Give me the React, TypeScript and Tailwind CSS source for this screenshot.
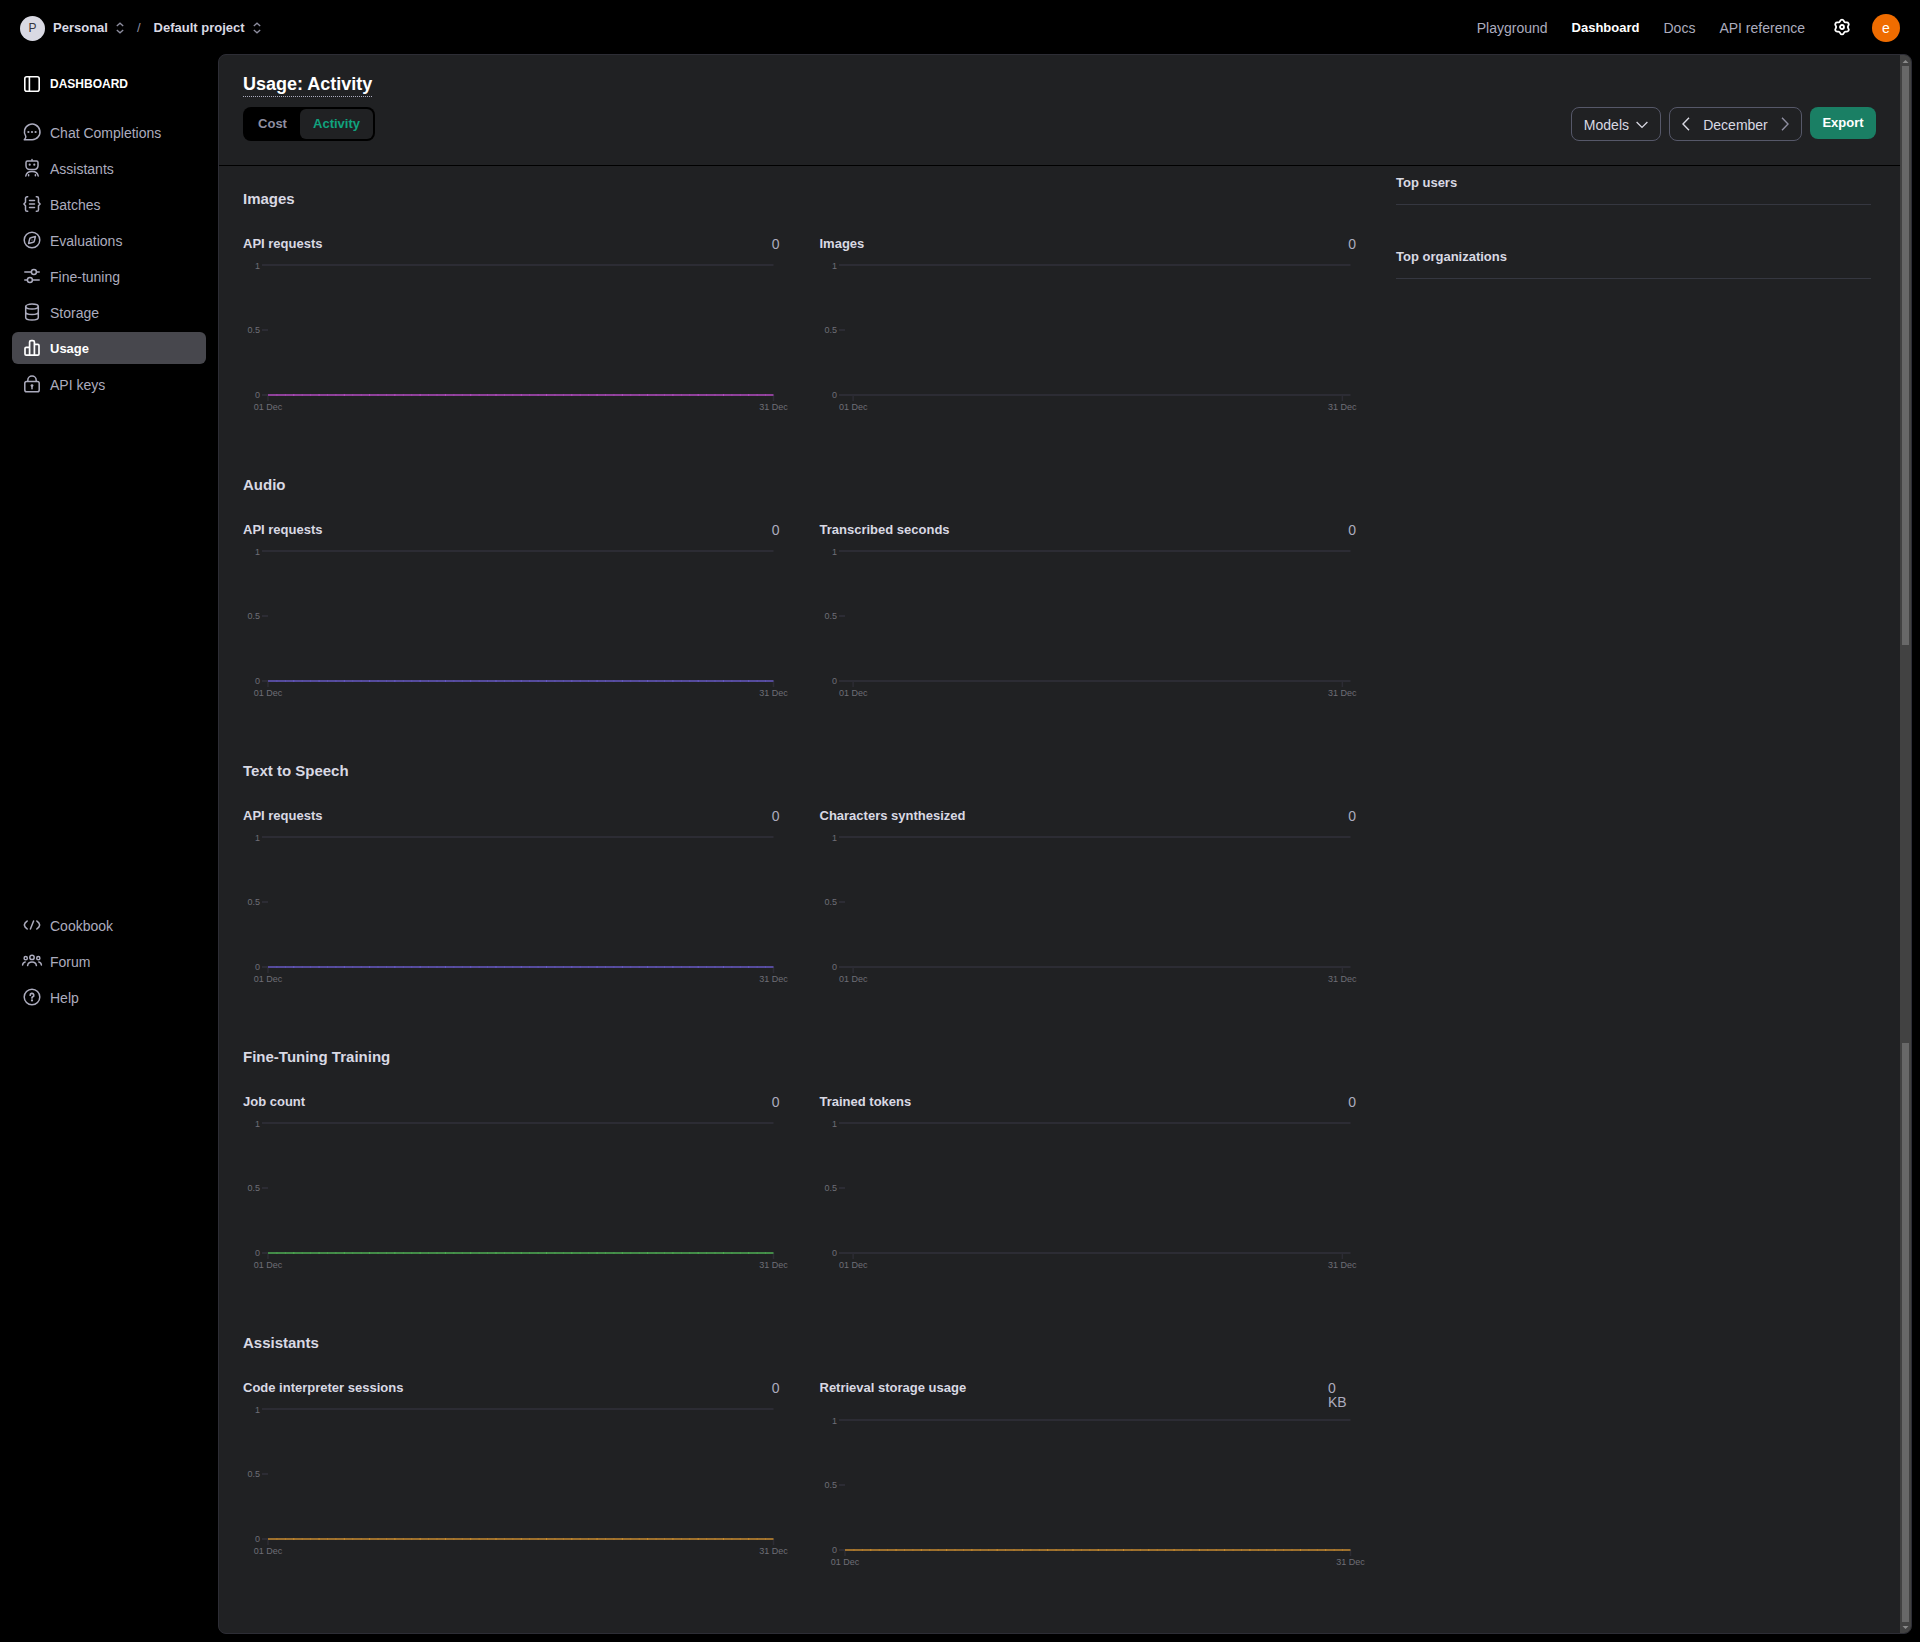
import React from "react";

type IconProps = { className?: string };

function Svg({ children, className }: React.PropsWithChildren<IconProps>) {
  return (
    <svg
      viewBox="0 0 18 18"
      aria-hidden="true"
      className={"h-[18px] w-[18px] shrink-0 overflow-visible " + (className ?? "")}
      fill="none"
      stroke="currentColor"
      strokeWidth="1.5"
      strokeLinecap="round"
      strokeLinejoin="round"
    >
      {children}
    </svg>
  );
}

const PanelIcon = () => (
  <Svg>
    <rect x="1.8" y="1.8" width="14.4" height="14.4" rx="2" strokeWidth="1.6" />
    <path d="M6.4 2v14" strokeWidth="1.6" />
  </Svg>
);
const ChatIcon = () => (
  <Svg>
    <path d="M1.3 16.7h7.9a7.8 7.8 0 1 0-6.4-3.300c.2 1.100-.5 2.400-1.500 3.300z" />
    <g fill="currentColor" stroke="none">
      <circle cx="5.4" cy="9" r="1.1" />
      <circle cx="9" cy="9" r="1.1" />
      <circle cx="12.6" cy="9" r="1.1" />
    </g>
  </Svg>
);
const RobotIcon = () => (
  <Svg>
    <path d="M9 .4V2M4.500 2h9A1.500 1.500 0 0 1 15 3.500v3.300a3.600 3.600 0 0 1-3.600 3.600H6.600A3.600 3.600 0 0 1 3 6.800V3.500A1.500 1.500 0 0 1 4.500 2z" />
    <path d="M2.800 17c.4-2.800 2.900-4.600 6.200-4.600s5.800 1.800 6.200 4.600M5.600 16.800v-1M12.400 16.800v-1" />
    <circle cx="6.700" cy="5.700" r="1.100" fill="currentColor" stroke="none" />
    <circle cx="11.300" cy="5.700" r="1.100" fill="currentColor" stroke="none" />
  </Svg>
);
const BatchIcon = () => (
  <Svg>
    <path d="M4.700 1.700h-.6a1.600 1.600 0 0 0-1.600 1.600v3.900L.9 9l1.600 1.800v3.900a1.600 1.600 0 0 0 1.600 1.600h.6M13.300 1.700h.6a1.600 1.600 0 0 1 1.600 1.600v3.900L17.100 9l-1.600 1.800v3.900a1.600 1.600 0 0 1-1.600 1.600h-.6M6.500 5.600h5M6.500 9h5M6.500 12.400h5" />
  </Svg>
);
const CompassIcon = () => (
  <Svg>
    <circle cx="9" cy="9" r="7.8" />
    <path d="M12.400 5.600 7.800 6.700a1.400 1.400 0 0 0-1.100 1.100l-1.100 4.600 4.600-1.100a1.400 1.400 0 0 0 1.100-1.100z" />
    <circle cx="9" cy="9" r=".6" fill="currentColor" stroke="none" />
  </Svg>
);
const TuneIcon = () => (
  <Svg>
    <path d="M1.800 5h6.400M13.600 5h2.600M1.800 13h2.400M9.600 13h6.600" />
    <circle cx="10.900" cy="5" r="2.500" />
    <circle cx="6.900" cy="13" r="2.500" />
  </Svg>
);
const StorageIcon = () => (
  <Svg>
    <ellipse cx="9" cy="3.600" rx="6.300" ry="2.500" />
    <path d="M2.700 3.600v10.800c0 1.400 2.800 2.500 6.300 2.500s6.300-1.100 6.300-2.500V3.600M2.700 9c0 1.400 2.800 2.500 6.300 2.500s6.300-1.100 6.300-2.500" />
  </Svg>
);
const BarsIcon = () => (
  <Svg>
    <path
      strokeWidth="1.7"
      d="M6.600 16.200H3.200A1.200 1.200 0 0 1 2 15V9.600a1.200 1.200 0 0 1 1.200-1.200h3.400M11.400 5.400h3.400A1.200 1.200 0 0 1 16 6.600V15a1.200 1.200 0 0 1-1.200 1.200h-3.400M6.600 16.200V3.100a1.500 1.500 0 0 1 1.500-1.500h1.800a1.500 1.500 0 0 1 1.500 1.500v13.100z"
    />
  </Svg>
);
const LockIcon = () => (
  <Svg>
    <rect x="1.800" y="6.400" width="14.400" height="10.400" rx="1.800" />
    <path d="M4.800 6.200v-.9a4.200 4.200 0 0 1 8.400 0v.9M9 11.500v2.200" />
    <circle cx="9" cy="10.600" r="1.400" fill="currentColor" stroke="none" />
  </Svg>
);
const CodeIcon = () => (
  <Svg>
    <path d="M4.200 5 2.200 6.900 1.300 9l.9 2.100 2 1.900M13.800 5l2 1.900.9 2.100-.9 2.100-2 1.900M10.600 5l-3.200 8" />
  </Svg>
);
const PeopleIcon = () => (
  <Svg>
    <circle cx="9" cy="5.400" r="2.200" />
    <circle cx="2.700" cy="6.200" r="1.600" />
    <circle cx="15.300" cy="6.200" r="1.600" />
    <path d="M4.600 13.600c.4-2.300 2.100-3.500 4.400-3.500s4 1.200 4.400 3.500M-.4 13c.2-1.700 1-2.700 2.600-3M18.400 13c-.2-1.700-1-2.700-2.600-3" />
  </Svg>
);
const HelpIcon = () => (
  <Svg>
    <circle cx="9" cy="9" r="7.8" />
    <path d="M7.200 7.200A1.800 1.800 0 1 1 9.800 8.800c-.5.300-.8.600-.8 1.200" strokeWidth="1.700" />
    <circle cx="9" cy="12.400" r="1.100" fill="currentColor" stroke="none" />
  </Svg>
);
const GearIcon = () => (
  <Svg>
    <path
      strokeWidth="1.800"
      d="M7.300 1.700a1.900 1.900 0 0 1 3.400 0l.3.600a1.900 1.900 0 0 0 1.900 1.100h.9a1.900 1.900 0 0 1 1.700 2.900l-.4.700a1.900 1.900 0 0 0 0 2l.4.700a1.900 1.900 0 0 1-1.700 2.900h-.9a1.900 1.900 0 0 0-1.900 1.100l-.3.600a1.900 1.900 0 0 1-3.400 0l-.3-.6a1.900 1.900 0 0 0-1.900-1.100h-.9a1.900 1.900 0 0 1-1.700-2.900l.4-.7a1.900 1.900 0 0 0 0-2l-.4-.7a1.900 1.900 0 0 1 1.700-2.900h.9A1.900 1.900 0 0 0 7 2.300z"
    />
    <circle cx="9" cy="8" r="2" strokeWidth="1.800" />
  </Svg>
);
const SortIcon = () => (
  <svg viewBox="0 0 8 12" aria-hidden="true" className="h-3 w-2 shrink-0" fill="none" stroke="#8e8ea0" strokeWidth="1.3">
    <path d="M.8 4 4 1.200 7.200 4M.8 8 4 10.800 7.200 8" />
  </svg>
);

type NavItem = { label: string; Icon: () => React.JSX.Element; active?: boolean };

const mainNav: NavItem[] = [
  { label: "Chat Completions", Icon: ChatIcon },
  { label: "Assistants", Icon: RobotIcon },
  { label: "Batches", Icon: BatchIcon },
  { label: "Evaluations", Icon: CompassIcon },
  { label: "Fine-tuning", Icon: TuneIcon },
  { label: "Storage", Icon: StorageIcon },
  { label: "Usage", Icon: BarsIcon, active: true },
  { label: "API keys", Icon: LockIcon },
];
const helpNav: NavItem[] = [
  { label: "Cookbook", Icon: CodeIcon },
  { label: "Forum", Icon: PeopleIcon },
  { label: "Help", Icon: HelpIcon },
];

function NavList({ items }: { items: NavItem[] }) {
  return (
    <ul className="flex flex-col gap-1">
      {items.map(({ label, Icon, active }) => (
        <li key={label}>
          <a
            href="#"
            aria-current={active ? "page" : undefined}
            className={
              "flex h-8 items-center gap-[9px] rounded-md pl-[11px] " +
              (active ? "bg-[#47474d] text-[13px] font-bold text-white" : "text-sm text-[#acacbe]")
            }
          >
            <Icon />
            <span className="pt-0.5">{label}</span>
          </a>
        </li>
      ))}
    </ul>
  );
}

type ChartSpec = { title: string; value: string; kind: "area" | "bar" };
type SectionSpec = { title: string; color: string; charts: ChartSpec[] };

const sections: SectionSpec[] = [
  {
    title: "Images",
    color: "#b44ac0",
    charts: [
      { title: "API requests", value: "0", kind: "area" },
      { title: "Images", value: "0", kind: "bar" },
    ],
  },
  {
    title: "Audio",
    color: "#6558c4",
    charts: [
      { title: "API requests", value: "0", kind: "area" },
      { title: "Transcribed seconds", value: "0", kind: "bar" },
    ],
  },
  {
    title: "Text to Speech",
    color: "#6558c4",
    charts: [
      { title: "API requests", value: "0", kind: "area" },
      { title: "Characters synthesized", value: "0", kind: "bar" },
    ],
  },
  {
    title: "Fine-Tuning Training",
    color: "#4caf50",
    charts: [
      { title: "Job count", value: "0", kind: "area" },
      { title: "Trained tokens", value: "0", kind: "bar" },
    ],
  },
  {
    title: "Assistants",
    color: "#c98a2b",
    charts: [
      { title: "Code interpreter sessions", value: "0", kind: "area" },
      { title: "Retrieval storage usage", value: "0 KB", kind: "area" },
    ],
  },
];

const steps = Array.from({ length: 59 }, (_, i) => i + 1);

function Plot({ kind, color }: { kind: "area" | "bar"; color: string }) {
  const first = kind === "bar" ? 100 / 62 : 0;
  const ends = [
    { x: first + "%", label: "01 Dec" },
    { x: 100 - first + "%", label: "31 Dec" },
  ];
  return (
    <div className="pr-[6px] pl-[25px]">
      <svg role="img" aria-label="Daily values for December" className="block h-[160px] w-full overflow-visible text-[9px]">
        <g fill="#6e6e76" textAnchor="end">
          <text x="-8" y="15">1</text>
          <text x="-8" y="79">0.5</text>
          <text x="-8" y="144">0</text>
        </g>
        <g fill="#2c2c34">
          <rect x="-6" y="10" width="6" height="2" />
          <rect x="0" y="10" width="100%" height="2" />
          <rect x="-6" y="75" width="6" height="2" />
          <rect x="-6" y="140" width="6" height="2" />
          <rect x="0" y="140" width="100%" height="2" />
        </g>
        {ends.map((e) => (
          <g key={e.label}>
            <line x1={e.x} x2={e.x} y1="141" y2="147" stroke="#2c2c34" strokeWidth="1.5" />
            <text x={e.x} y="156" fill="#6e6e76" textAnchor="middle">
              {e.label}
            </text>
          </g>
        ))}
        {kind === "area" && (
          <g fill={color}>
            <rect x="0" y="140" width="100%" height="2" opacity="0.72" />
            {steps.map((i) => (
              <rect key={i} x={(i * 100) / 60 + "%"} y="140" width="1" height="2" opacity={i % 3 === 0 ? 1 : 0.5} />
            ))}
          </g>
        )}
      </svg>
    </div>
  );
}

function Chart({ spec, color }: { spec: ChartSpec; color: string }) {
  const wide = spec.value.length > 1;
  return (
    <div className="min-w-0 flex-1">
      <div className="flex items-start justify-between">
        <h3 className="text-[13px] leading-[14px] font-bold text-[#d9d9e3]">{spec.title}</h3>
        <span className={"text-sm leading-[14px] text-[#acacbe] " + (wide ? "w-7" : "")}>{spec.value}</span>
      </div>
      <div className={wide ? "" : "pt-[3px]"}>
        <Plot kind={spec.kind} color={color} />
      </div>
    </div>
  );
}

export default function App() {
  return (
    <div className="flex min-h-screen flex-col bg-black font-['Liberation_Sans',sans-serif] text-sm text-[#d9d9e3]">
      <header className="flex h-[54px] items-center justify-between px-5 pt-0.5">
        <div className="flex items-center gap-2 text-[13px] font-bold">
          <span className="flex h-[25px] w-[25px] items-center justify-center rounded-full bg-[#d9d9e3] text-xs font-normal text-[#353740]">P</span>
          <button type="button" className="flex items-center gap-2">
            Personal <SortIcon />
          </button>
          <span className="mx-[5px] font-normal text-[#8e8ea0]">/</span>
          <button type="button" className="flex items-center gap-2">
            Default project <SortIcon />
          </button>
        </div>
        <div className="flex items-center gap-7 text-[#acacbe]">
          <nav aria-label="Site" className="flex items-center gap-6">
            <a href="#">Playground</a>
            <a href="#" className="text-[13px] font-bold text-white">Dashboard</a>
            <a href="#">Docs</a>
            <a href="#">API reference</a>
          </nav>
          <div className="flex items-center gap-[21px]">
            <button type="button" aria-label="Settings" className="text-white">
              <GearIcon />
            </button>
            <button type="button" aria-label="Account" className="h-7 w-7 rounded-full bg-[#ef6c00] text-sm text-white">
              e
            </button>
          </div>
        </div>
      </header>

      <div className="flex flex-1 pr-2 pb-2">
        <aside className="w-[218px] shrink-0 px-3 pt-[21px]">
          <div className="flex items-center gap-[9px] pl-[11px] text-xs leading-[18px] font-bold text-white">
            <PanelIcon />
            DASHBOARD
          </div>
          <nav aria-label="Dashboard" className="mt-[23px]">
            <NavList items={mainNav} />
          </nav>
          <nav aria-label="Resources" className="mt-[509px]">
            <NavList items={helpNav} />
          </nav>
        </aside>

        <main className="flex min-w-0 flex-1 overflow-hidden rounded-lg border border-[#2d2d35] bg-[#202123]">
          <div className="min-w-0 flex-1">
            <div className="flex h-[111px] items-start justify-between border-b border-black px-6">
              <div className="pt-[17px]">
                <h1 className="w-fit border-b border-dotted border-[#acacbe] text-lg leading-6 font-bold text-white">Usage: Activity</h1>
                <div role="group" aria-label="View" className="mt-[10px] flex w-[132px] rounded-lg bg-black p-0.5 text-[13px] font-bold">
                  <button type="button" className="h-[30px] flex-1 text-[#8e8ea0]">Cost</button>
                  <button type="button" aria-pressed="true" className="h-[30px] w-[73px] rounded-md bg-[#202123] text-[#10a37f]">
                    Activity
                  </button>
                </div>
              </div>
              <div className="flex items-start gap-2 pt-[52px]">
                <button type="button" className="flex h-[34px] items-center gap-[7px] rounded-lg border border-[#565869] px-3 pt-0.5">
                  Models
                  <svg viewBox="0 0 12 8" aria-hidden="true" className="h-2 w-3" fill="none" stroke="currentColor" strokeWidth="1.3">
                    <path d="m.6 1 5.400 5.400L11.400 1" />
                  </svg>
                </button>
                <div className="flex h-[34px] w-[133px] items-center justify-between rounded-lg border border-[#565869] px-3">
                  <button type="button" aria-label="Previous month">
                    <svg viewBox="0 0 8 14" aria-hidden="true" className="h-3.5 w-2" fill="none" stroke="currentColor" strokeWidth="1.4">
                      <path d="M7 .8 1 7l6 6.200" />
                    </svg>
                  </button>
                  <span className="pt-0.5">December</span>
                  <button type="button" aria-label="Next month" className="text-[#8e8ea0]">
                    <svg viewBox="0 0 8 14" aria-hidden="true" className="h-3.5 w-2" fill="none" stroke="currentColor" strokeWidth="1.4">
                      <path d="m1 .8 6 6.200-6 6.200" />
                    </svg>
                  </button>
                </div>
                <button type="button" className="h-8 w-[66px] rounded-lg bg-[#1a7f64] text-[13px] font-bold text-white">Export</button>
              </div>
            </div>

            <div className="flex">
              <div className="min-w-0 flex-1 pt-[21px] pr-10 pl-6">
                {sections.map((s) => (
                  <section key={s.title} className="h-[286px]">
                    <h2 className="text-[15px] leading-6 font-bold">{s.title}</h2>
                    <div className="mt-[26px] flex gap-10">
                      {s.charts.map((c) => (
                        <Chart key={c.title} spec={c} color={s.color} />
                      ))}
                    </div>
                  </section>
                ))}
              </div>
              <aside className="flex w-[504px] shrink-0 flex-col gap-10 pt-[5px] pr-[29px] text-[13px] leading-6 font-bold">
                <h2 className="border-b border-[#353740] pb-[9px]">Top users</h2>
                <h2 className="border-b border-[#353740] pb-[9px]">Top organizations</h2>
              </aside>
            </div>
          </div>

          <div aria-hidden="true" className="flex w-[11px] shrink-0 flex-col justify-between bg-[#424242]">
            <div>
              <svg viewBox="0 0 11 11" className="h-[11px] w-[11px]" fill="#8a8a8a">
                <path d="m5.500 5 3 3h-6z" />
              </svg>
              <div className="mx-0.5 h-[579px] bg-[#686868]" />
            </div>
            <div>
              <div className="mx-0.5 h-[579px] bg-[#686868]" />
              <svg viewBox="0 0 11 11" className="h-[11px] w-[11px]" fill="#8a8a8a">
                <path d="m5.500 7-3-3h6z" />
              </svg>
            </div>
          </div>
        </main>
      </div>
    </div>
  );
}
